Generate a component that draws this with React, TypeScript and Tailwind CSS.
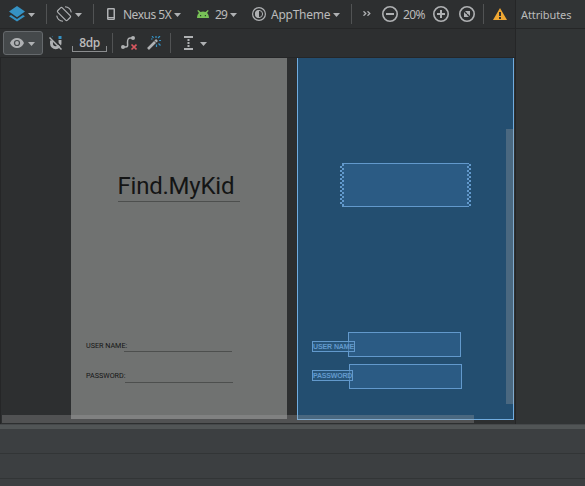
import React from "react";

type BoxProps = { className: string; children?: React.ReactNode };

const Caret = ({ className = "" }: { className?: string }) => (
  <svg className={`block h-[4px] w-[7px] shrink-0 ${className}`} viewBox="0 0 7 4" fill="#afb1b3">
    <path d="M0 0h7L3.5 4z" />
  </svg>
);

const Separator = ({ className }: { className: string }) => (
  <div className={`h-5 w-px shrink-0 bg-[#515354] ${className}`} />
);

const Label = ({ className, children }: BoxProps) => (
  <span className={`block shrink-0 whitespace-nowrap leading-[16px] ${className}`}>{children}</span>
);

const LayersIcon = () => (
  <svg className="ml-[9px] block h-4 w-4 shrink-0" viewBox="0 0 16 16">
    <path d="M0 10.2 2 9l6 4 6-4 2 1.2L8 15.6z" fill="#3592c4" />
    <path d="M8 0 16 5.6 8 11.2 0 5.6z" fill="#3592c4" />
  </svg>
);

const RotateIcon = () => (
  <svg className="ml-[9px] block h-4 w-4 shrink-0" viewBox="0 0 16 16" fill="none" stroke="#afb1b3">
    <rect x="4.8" y="1.2" width="6.4" height="13.6" rx="1.3" transform="rotate(-45 8 8)" strokeWidth="1.2" />
    <path d="M9 .7c3.300.300 5.700 2.500 6.300 5.600M7 15.300C3.700 15 1.300 12.800.7 9.700" strokeWidth="1.1" />
  </svg>
);

const PhoneIcon = () => (
  <svg className="ml-[13px] block h-3 w-2 shrink-0" viewBox="0 0 8 12" fill="none" stroke="#afb1b3">
    <rect x=".75" y=".75" width="6.5" height="10.5" rx=".6" strokeWidth="1.5" />
    <path d="M1 9.500h6" strokeWidth="1" />
  </svg>
);

const AndroidIcon = () => (
  <svg className="ml-4 block h-2 w-3 shrink-0" viewBox="0 0 12 8">
    <path d="M0 8C.1 5.400 1 3.600 2 2.900L.3.8 1.200 0l2.300 2.100C5 1.400 7 1.400 8.500 2.100L10.800 0l.9.8L10 2.900C11 3.600 11.900 5.400 12 8z" fill="#78c257" />
    <path d="M3 5h1.200v1.200H3zM7.800 5H9v1.200H7.800z" fill="#29462a" />
  </svg>
);

const ThemeIcon = () => (
  <svg className="ml-[15px] block h-[14px] w-[14px] shrink-0" viewBox="0 0 14 14">
    <circle cx="7" cy="7" r="6.4" fill="none" stroke="#afb1b3" strokeWidth="1.2" />
    <circle cx="7" cy="7" r="3.6" fill="none" stroke="#afb1b3" strokeWidth="1" />
    <path d="M7 3a4 4 0 0 0 0 8z" fill="#afb1b3" />
  </svg>
);

const ZoomButton = ({ kind, className }: { kind: "out" | "in" | "fit"; className: string }) => (
  <svg className={`block h-4 w-4 shrink-0 ${className}`} viewBox="0 0 16 16" fill="none" stroke="#afb1b3">
    <circle cx="8" cy="8" r="7.2" strokeWidth="1.6" />
    {kind !== "fit" && <path d="M4 8h8" strokeWidth="2" />}
    {kind === "in" && <path d="M8 4v8" strokeWidth="2" />}
    {kind === "fit" && <path d="M6 5h5v5zM5 6v5h5z" fill="#afb1b3" stroke="none" />}
    {kind === "fit" && <path d="m7 9 2-2" strokeWidth=".6" />}
  </svg>
);

const TopBar = () => (
  <div className="flex h-[29px] items-center border-b border-[#252627]">
    <LayersIcon />
    <Caret className="ml-[3px] mt-px" />
    <Separator className="ml-[11px]" />
    <RotateIcon />
    <Caret className="ml-[3px] mt-px" />
    <Separator className="ml-[11px]" />
    <PhoneIcon />
    <Label className="ml-2 mt-px w-[51px] text-[12px] tracking-[-0.5px]">Nexus 5X</Label>
    <Caret className="mt-px" />
    <AndroidIcon />
    <Label className="ml-[6px] mt-px w-[15px] text-[12px] tracking-[-0.8px]">29</Label>
    <Caret className="mt-px" />
    <ThemeIcon />
    <Label className="ml-[5px] mt-px w-[62px] text-[12px] tracking-[-0.25px]">AppTheme</Label>
    <Caret className="mt-px" />
    <Separator className="ml-[11px]" />
    <svg className="ml-[11px] -mt-[2px] block h-[5px] w-2 shrink-0" viewBox="0 0 8 5" fill="none" stroke="#afb1b3" strokeWidth="1.300">
      <path d="m.5.3 2.300 2.200L.5 4.700M4.500.3l2.300 2.200-2.300 2.200" />
    </svg>
    <ZoomButton kind="out" className="ml-[11px]" />
    <Label className="ml-[5px] mt-px w-[25px] text-[12px] tracking-[-0.6px]">20%</Label>
    <ZoomButton kind="in" className="ml-[5px]" />
    <ZoomButton kind="fit" className="ml-[10px]" />
    <Separator className="ml-2" />
    <svg className="ml-[9px] block h-3 w-[14px] shrink-0" viewBox="0 0 14 12">
      <path d="M7 0l7 12H0z" fill="#f0a732" />
      <path d="M6 4h2v4H6zM6 9h2v2H6z" fill="#343230" />
    </svg>
  </div>
);

const DesignBar = () => (
  <div className="flex h-[29px] items-center border-b border-[#252627]">
    <div className="ml-[3px] flex h-6 w-10 shrink-0 items-center rounded-[3px] border border-[#65696c] bg-[#45494b]">
      <svg className="ml-[6px] block h-[10px] w-[14px]" viewBox="0 0 14 10">
        <path d="M0 5C1.500 1.700 4 0 7 0s5.500 1.700 7 5c-1.500 3.300-4 5-7 5S1.500 8.300 0 5z" fill="#afb1b3" />
        <circle cx="7" cy="5" r="3.100" fill="#45494b" />
        <circle cx="7" cy="5" r="1.900" fill="#afb1b3" />
      </svg>
      <Caret className="ml-1 mt-px" />
    </div>
    <svg className="ml-[6px] block h-[14px] w-[14px] shrink-0" viewBox="0 0 14 14">
      <path d="M2.500 4.500v3a4.100 4.100 0 0 0 8.500 0V4" fill="none" stroke="#afb1b3" strokeWidth="2.900" />
      <path d="M9.500 0h3v3h-3zM1.500.500h2.500v2z" fill="#3592c4" />
      <path d="m1.500 0 12 12" stroke="#2d2f30" strokeWidth="1.500" />
      <path d="m.5 1.500 12 12" stroke="#afb1b3" strokeWidth="1.500" />
    </svg>
    <div className="ml-[9px] h-[17px] w-[35px] shrink-0 border-b border-[#8b8d8f]">
      <div className="mt-px h-[14px] text-center font-['Open_Sans',sans-serif] text-[12px] font-semibold leading-[14px] tracking-[-0.5px]">8dp</div>
      <div className="-mt-[4px] h-[5px] border-x border-[#8b8d8f]" />
    </div>
    <Separator className="ml-[5px]" />
    <svg className="ml-[8px] block h-4 w-4 shrink-0" viewBox="0 0 16 16" fill="none">
      <path d="M2 12h2.500c3 0 2-2 2-4.500S6.500 3 9.500 3H12" stroke="#afb1b3" strokeWidth="1.500" />
      <circle cx="2" cy="12" r="2" fill="#afb1b3" />
      <circle cx="12" cy="3" r="2" fill="#afb1b3" />
      <path d="m10.500 9.500 5 5m0-5-5 5" stroke="#db5860" strokeWidth="1.700" />
    </svg>
    <svg className="ml-[10px] block h-[14px] w-[14px] shrink-0" viewBox="0 0 14 14">
      <path d="m1 13 9-9" stroke="#afb1b3" strokeWidth="2.600" />
      <path d="m7 4.500 2.500 2.500" stroke="#2d2f30" strokeWidth=".9" />
      <path d="M5 0l1.500 2M9 0v2M13 0l-2 2M12 4.500h2M11.500 7.500l2 2M4 3h1.500M9.500 8.500V11" stroke="#3592c4" strokeWidth="1.200" />
    </svg>
    <Separator className="ml-[9px]" />
    <svg className="ml-[13px] block h-[14px] w-[9px] shrink-0" viewBox="0 0 9 14" stroke="#afb1b3" fill="none">
      <path d="M0 1h9M0 13h9" strokeWidth="2" />
      <path d="M4.500 3v8" strokeWidth="2" strokeDasharray="2 1" />
    </svg>
    <Caret className="ml-[7px] mt-px" />
  </div>
);

const Zigzag = () => (
  <svg className="relative z-10 block h-[44px] w-[4px] shrink-0" viewBox="0 0 4 44" fill="none" stroke="#6299cc" strokeWidth="2" strokeDasharray="2 2">
    <path d="M1 3v39" />
    <path d="M3 1v43" />
  </svg>
);

const DesignSurface = () => (
  <div className="h-[361px] w-[216px] shrink-0 bg-[#707271] font-[Roboto,sans-serif] text-[#141515]">
    <div className="ml-[47px] h-[144px] w-[122px] border-b border-[#4d4f4e] pt-[114px]">
      <div className="-ml-[0.5px] h-7 whitespace-nowrap text-[24px] leading-7 tracking-[-0.22px]">Find.MyKid</div>
    </div>
    <div className="ml-[15px] mt-[140px] flex h-[10px] items-end">
      <span className="w-[38px] whitespace-nowrap pb-[2px] text-[7.2px] leading-[8px]">USER NAME:</span>
      <div className="h-px w-[108px] bg-[#4d4f4e]" />
    </div>
    <div className="ml-[15px] mt-[20px] flex h-[11px] items-end">
      <span className="w-[39px] whitespace-nowrap pb-[3px] text-[7.2px] leading-[8px]">PASSWORD:</span>
      <div className="h-px w-[108px] bg-[#4d4f4e]" />
    </div>
  </div>
);

type FieldProps = { label: string; rowClass: string; labelClass: string; inputClass: string };

const BlueField = ({ label, rowClass, labelClass, inputClass }: FieldProps) => (
  <div className={`ml-[14px] flex h-[25px] items-start ${rowClass}`}>
    <div className={`relative z-10 h-[11px] shrink-0 overflow-hidden whitespace-nowrap border border-[#6299cc] bg-[#2b5b84]/50 text-[7px] leading-[10px] text-[#6299cc] ${labelClass}`}>
      {label}
    </div>
    <div className={`h-[25px] w-[113px] shrink-0 border border-[#6299cc] bg-[#2b5b84] ${inputClass}`} />
  </div>
);

const BlueprintSurface = () => (
  <div className="ml-[10px] h-[362px] w-[217px] shrink-0 border border-t-0 border-[#70acdf] bg-[#234e70] font-['Liberation_Sans',sans-serif]">
    <div className="ml-[42px] flex pt-[105px]">
      <Zigzag />
      <div className="-mx-[2px] h-[44px] w-[127px] border-y border-[#6299cc] bg-[#2b5b84]" />
      <Zigzag />
    </div>
    <BlueField label="USER NAME" rowClass="mt-[125px]" labelClass="mt-[9px] w-[43px] font-bold tracking-[-0.1px]" inputClass="-ml-[7px]" />
    <BlueField label="PASSWORD" rowClass="mt-[7px]" labelClass="mt-[6px] w-[41px] font-bold tracking-[-0.2px]" inputClass="-ml-[4px]" />
  </div>
);

export default function App() {
  return (
    <div className="h-[486px] w-[585px] overflow-hidden bg-[#3c3f41] font-['Noto_Sans',sans-serif] text-[#bbbbbb]">
      <div className="flex h-[424px]">
        <main className="w-[515px] shrink-0 bg-[#2d2f30]">
          <TopBar />
          <DesignBar />
          <div className="relative flex h-[366px] border-l border-[#252627] pl-[70px]">
            <DesignSurface />
            <BlueprintSurface />
            <div className="absolute right-px top-[71px] h-[275px] w-2 bg-[#a6a6a6]/30" />
            <div className="absolute left-px top-[357px] h-2 w-[472px] bg-[#a6a6a6]/30" />
          </div>
        </main>
        <aside className="w-[70px] border-l border-[#252627] bg-[#313435]">
          <div className="flex h-[29px] items-center border-b border-[#252627] pl-[5px]">
            <Label className="mt-[2px] text-[11px] tracking-[-0.1px]">Attributes</Label>
          </div>
        </aside>
      </div>
      <div className="h-[5px] border-t border-[#45484a] bg-[#515556]" />
      <div className="h-[25px] border-b border-[#323536]" />
      <div className="h-[25px] border-b border-[#323536]" />
    </div>
  );
}
